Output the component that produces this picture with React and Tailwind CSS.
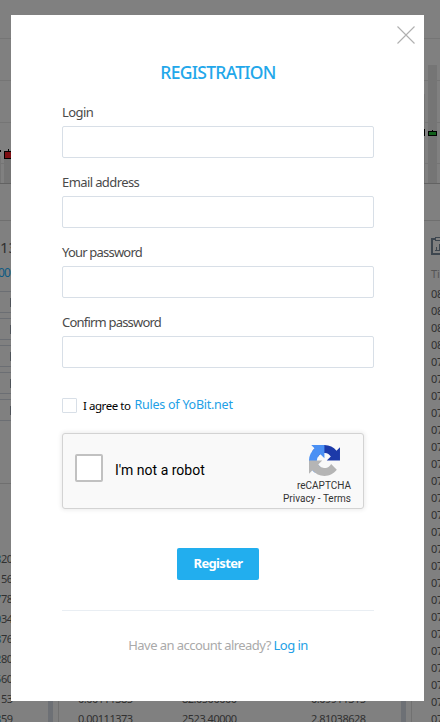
import React, { useState } from "react";

const fields = [
  { name: "login", label: "Login", type: "text", spacing: "tracking-[-0.55px]" },
  { name: "email", label: "Email address", type: "text", spacing: "tracking-[-0.6px]" },
  { name: "password", label: "Your password", type: "password", spacing: "tracking-[-0.8px]" },
  { name: "confirm", label: "Confirm password", type: "password", spacing: "tracking-[-0.8px]" },
];

const sellAmounts = ["820", "156", "778", "034", "876", "280", "560", "153", "859"];

const orders = [
  ["0.00111385", "82.0500000", "0.09911315"],
  ["0.00111373", "2523.40000", "2.81038628"],
];

const tradeHours = Array.from({ length: 26 }, (_, i) => (i < 4 ? "08" : "07"));

const PriceChart = () => (
  <svg
    className="shrink-0"
    width="440"
    height="184"
    viewBox="0 0 440 184"
    shapeRendering="crispEdges"
  >
    <g fill="#757575">
      <rect x="0" y="38" width="440" height="1" />
      <rect x="0" y="80" width="440" height="1" />
      <rect x="0" y="122" width="440" height="1" />
      <rect x="0" y="163" width="440" height="1" />
      <rect x="0" y="156" width="1" height="27" />
      <rect x="4" y="159" width="8" height="24" />
      <rect x="424" y="94" width="1" height="89" />
      <rect x="428" y="65" width="9" height="118" />
    </g>
    <rect x="0" y="183" width="440" height="1" fill="#626262" />
    <rect x="0" y="150" width="1" height="2" fill="#000" />
    <rect x="8" y="149" width="1" height="3" fill="#000" />
    <rect x="4" y="151" width="9" height="8" fill="#000" />
    <rect x="5" y="152" width="8" height="6" fill="#7d0f13" />
    <rect x="424" y="129" width="1" height="7" fill="#000" />
    <rect x="432" y="130" width="1" height="2" fill="#000" />
    <rect x="428" y="131" width="9" height="5" fill="#000" />
    <rect x="429" y="132" width="7" height="3" fill="#11611b" />
  </svg>
);

const MarketPage = () => (
  <div className="flex h-full w-full flex-col text-[#303030]">
    <PriceChart />
    <div className="h-[37px] shrink-0 border-b border-[#6f6f6f]" />

    <div className="flex min-h-0 flex-1">
      <div className="w-[48px] shrink-0">
        <div className="h-[42px] pt-[15px] text-[15px] leading-[22px]">13</div>
        <div className="-ml-[2px] h-[28px] text-[12px] leading-[20px] tracking-[-0.8px] text-[#0d5a83]">
          000
        </div>
        <div className="flex flex-col gap-[5px]">
          {[0, 1, 2, 3, 4].map((i) => (
            <div
              key={i}
              className="flex h-[22px] items-center border-y border-[#6b6e73] pl-[10px]"
            >
              <span className="h-[9px] w-[2px] bg-[#4e5359]" />
            </div>
          ))}
        </div>
        <div className="mt-[62px] border-b border-[#6f6f6f]" />
        <div className="mt-[65px] -ml-[5px]">
          {sellAmounts.map((amount) => (
            <div key={amount} className="h-5 text-[11px] leading-5 tracking-[-0.4px]">
              <span className="text-[#1c4c68]">{amount[0]}</span>
              {amount.slice(1)}
            </div>
          ))}
        </div>
      </div>

      <div className="w-[5px] shrink-0 bg-[#6d7075]" />
      <div className="ml-[5px] flex w-[343px] shrink-0 flex-col border-l border-[#717171] pt-[468px]">
        {orders.map((row) => (
          <div
            key={row[0]}
            className="flex h-5 shrink-0 pl-[19px] text-[11px] leading-5 tracking-[-0.5px]"
          >
            <span className="w-[104px]">{row[0]}</span>
            <span className="w-[129px]">{row[1]}</span>
            <span>{row[2]}</span>
          </div>
        ))}
      </div>

      <div className="w-[5px] shrink-0 bg-[#6d7075]" />
      <div className="ml-[5px] flex-1 shrink-0 overflow-hidden border-l border-[#717171] pl-[19px]">
        <svg className="mt-4 block" width="18" height="18" viewBox="0 0 18 18" fill="none">
          <rect x="1" y="2" width="16" height="15" stroke="#3d464f" strokeWidth="2" />
          <rect x="4.5" y="0.5" width="9" height="3" fill="#808080" stroke="#3d464f" />
          <path d="M4 13.5h10M5.5 13v-3M8.5 13V7M11.5 13V9" stroke="#3d464f" />
        </svg>
        <div className="h-[30px] pt-[9px] text-[11px] leading-5 text-[#555]">Time</div>
        {tradeHours.map((hour, i) => (
          <div key={i} className="h-[17px] text-[11px] leading-[17px] tracking-[-0.4px]">
            {hour}
          </div>
        ))}
      </div>
    </div>
  </div>
);

const CaptchaLogo = () => (
  <svg width="31" height="31" viewBox="0 0 64 64">
    <path
      fill="#1c3aa9"
      d="M64 31.955l-.033-1.37V4.687l-7.16 7.16C50.948 4.674 42.033.093 32.05.093c-10.4 0-19.622 4.96-25.458 12.64l11.736 11.86a15.55 15.55 0 0 1 4.754-5.334c2.05-1.6 4.952-2.906 8.968-2.906.485 0 .86.057 1.135.163 4.976.393 9.288 3.14 11.828 7.124l-8.307 8.307L64 31.953"
    />
    <path
      fill="#4a90f4"
      d="M31.862.094l-1.37.033H4.594l7.16 7.16C4.58 13.147 0 22.06 0 32.046c0 10.4 4.96 19.622 12.64 25.458L24.5 45.768a15.55 15.55 0 0 1-5.334-4.754c-1.6-2.05-2.906-4.952-2.906-8.968 0-.485.057-.86.163-1.135.393-4.976 3.14-9.288 7.124-11.828l8.307 8.307L31.86.095"
    />
    <path
      fill="#b5b5b5"
      d="M.001 32.045l.033 1.37v25.898l7.16-7.16c5.86 7.173 14.774 11.754 24.76 11.754 10.4 0 19.622-4.96 25.458-12.64l-11.736-11.86a15.55 15.55 0 0 1-4.754 5.334c-2.05 1.6-4.952 2.906-8.968 2.906-.485 0-.86-.057-1.135-.163-4.976-.393-9.288-3.14-11.828-7.124l8.307-8.307c-10.522.04-22.4.066-27.295-.005"
    />
  </svg>
);

const RegistrationModal = () => {
  const [formData, setFormData] = useState({
    login: "",
    email: "",
    password: "",
    confirm: "",
  });
  const [agree, setAgree] = useState(false);
  const [robot, setRobot] = useState(false);

  const handleChange = (e) => {
    const { name, value } = e.target;
    setFormData((prev) => ({ ...prev, [name]: value }));
  };

  return (
    <form
      onSubmit={(e) => e.preventDefault()}
      className="absolute top-[15px] left-[11px] h-[686px] w-[413px] bg-white pt-[45px] pr-[50px] pl-[51px]"
    >
      <button type="button" aria-label="Close" className="absolute top-[11px] right-[9px]">
        <svg width="18" height="18" viewBox="0 0 18 18" fill="none">
          <path d="M0.5 0.5 17.5 17.5M17.5 0.5 0.5 17.5" stroke="#b0b0b0" strokeWidth="1.1" />
        </svg>
      </button>

      <h2 className="text-center text-[17.5px] leading-6 font-medium tracking-[-0.7px] text-[#22a7ea]">
        REGISTRATION
      </h2>

      <div className="mt-[18px] flex flex-col">
        {fields.map((field) => (
          <label key={field.name} className="block h-[70px]">
            <span className={`block h-6 text-[13px] leading-5 text-[#4a4a4a] ${field.spacing}`}>
              {field.label}
            </span>
            <input
              type={field.type}
              name={field.name}
              value={formData[field.name]}
              onChange={handleChange}
              className="block h-8 w-full rounded-[2px] border border-[#d8dfe7] px-2 text-[13px]"
            />
          </label>
        ))}
      </div>

      <label className="mt-[16px] flex h-[15px] items-center text-black">
        <input
          type="checkbox"
          checked={agree}
          onChange={(e) => setAgree(e.target.checked)}
          className="mr-[6px] size-[15px] appearance-none rounded-[1px] border border-[#d8dfe7] checked:bg-[#22aeee]"
        />
        <span className="mr-[4px] text-[11.5px] tracking-[-0.45px]">I agree to</span>
        <a href="#rules" className="text-[12.5px] tracking-[-0.25px] text-[#22a0e6]">
          Rules of YoBit.net
        </a>
      </label>

      <div className="mt-[20px] flex h-[76px] w-[302px] items-start justify-between rounded-[3px] border border-[#d3d3d3] bg-[#f9f9f9] pl-[12px] font-[Roboto,sans-serif] shadow-[0_0_4px_1px_rgba(0,0,0,0.08)]">
        <label className="flex h-[70px] items-center text-sm text-black">
          <input
            type="checkbox"
            checked={robot}
            onChange={(e) => setRobot(e.target.checked)}
            className="mr-[12px] -mt-[2px] size-7 appearance-none rounded-[2px] border-2 border-[#c1c1c1] bg-white checked:bg-[#4a90f4]"
          />
          <span className="mt-[2px]">I'm not a robot</span>
        </label>
        <div className="flex flex-col items-end pt-[11px] pr-[12px] text-[10px] leading-[13px] text-[#333]">
          <div className="mr-[11px]">
            <CaptchaLogo />
          </div>
          <span className="mt-[3px]">reCAPTCHA</span>
          <span>Privacy - Terms</span>
        </div>
      </div>

      <button
        type="submit"
        className="mx-auto mt-[39px] block h-8 w-[82px] rounded-[2px] bg-[#22aeee] text-[13px] font-bold tracking-[-0.65px] text-white"
      >
        Register
      </button>

      <div className="mt-[30px] border-t border-[#e9eef3] pt-[24px] text-center text-[13px] leading-5 tracking-[-0.55px] text-[#aaaaaa]">
        Have an account already?{" "}
        <a href="#login" className="text-[#22a0e6]">
          Log in
        </a>
      </div>
    </form>
  );
};

const App = () => {
  return (
    <div className="relative h-[722px] w-[440px] overflow-hidden bg-[#808080] font-['Noto_Sans',sans-serif]">
      <MarketPage />
      <RegistrationModal />
    </div>
  );
};

export default App;
